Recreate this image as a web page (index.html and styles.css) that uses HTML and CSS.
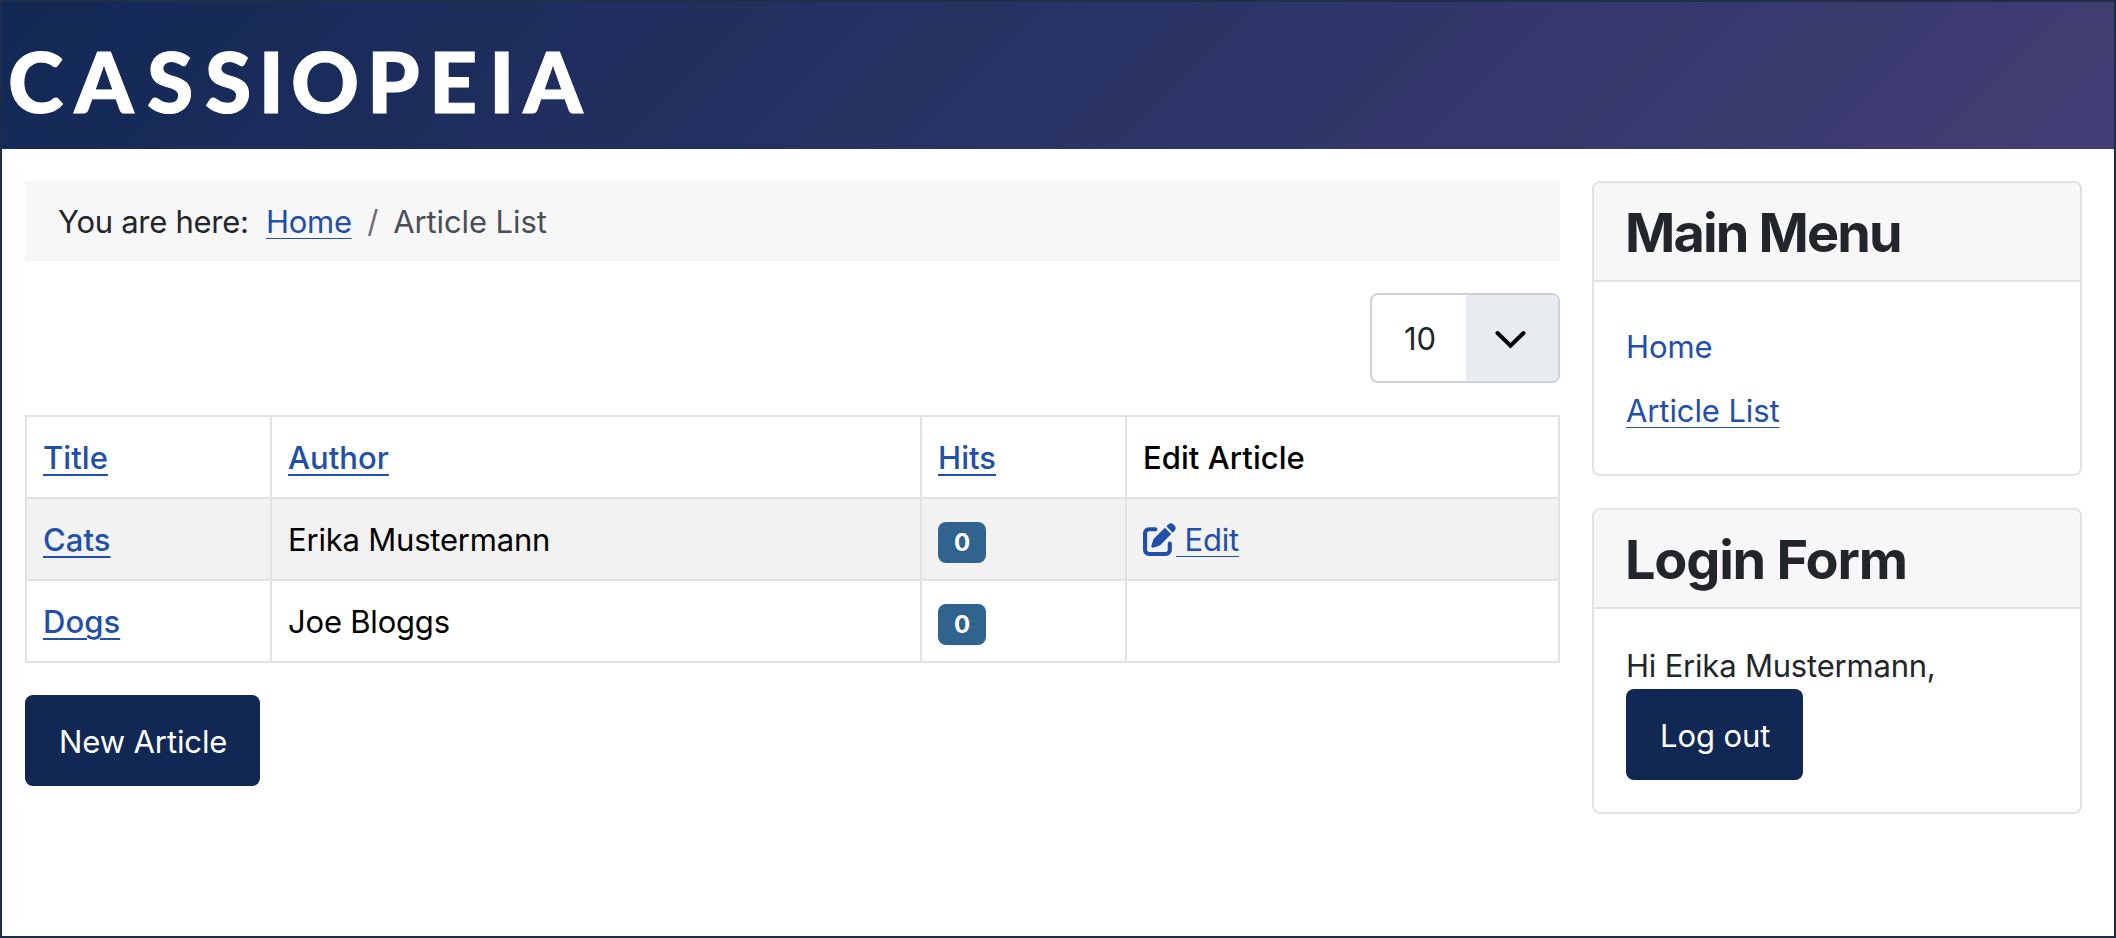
FILE: index.html
```html
<!DOCTYPE html>
<html lang="en">
<head>
<meta charset="utf-8">
<title>Article List</title>
<link rel="stylesheet" href="styles.css">
</head>
<body>
<div class="page">
  <header class="header">
    <svg class="brand" width="600" height="147" viewBox="2 2 600 147" role="img" aria-label="Cassiopeia">
      <text class="brand-text" y="113" x="8 74.5 147 205 258.5 291 367 429 489 523.5">CASSIOPEIA</text>
    </svg>
  </header>
  <div class="container">
    <main class="main">
      <nav class="breadcrumb">
        <span class="here">You are here:</span>
        <a class="link" href="#">Home</a>
        <span class="divider">/</span>
        <span class="current">Article List</span>
      </nav>
      <div class="limit">
        <div class="select">
          <span class="select-value">10</span>
          <span class="select-arrow">
            <svg width="32" height="20" viewBox="0 0 32 20"><path d="M3.5 3 L16.5 15.7 L29.5 3" fill="none" stroke="#000" stroke-width="4" stroke-linecap="round"/></svg>
          </span>
        </div>
      </div>
      <table class="articles">
        <colgroup><col class="c-title"><col class="c-author"><col class="c-hits"><col></colgroup>
        <thead>
          <tr>
            <th><a class="link strong" href="#">Title</a></th>
            <th><a class="link strong" href="#">Author</a></th>
            <th><a class="link strong" href="#">Hits</a></th>
            <th>Edit Article</th>
          </tr>
        </thead>
        <tbody>
          <tr class="striped">
            <th><a class="link strong" href="#">Cats</a></th>
            <td>Erika Mustermann</td>
            <td><div class="badge-box"><span class="badge">0</span></div></td>
            <td><a class="edit" href="#"><svg width="33" height="33" viewBox="0 0 512 512"><path fill="currentColor" d="M471.6 21.7c-21.9-21.9-57.3-21.9-79.2 0L362.3 51.7l97.9 97.9 30.1-30.1c21.9-21.9 21.9-57.3 0-79.2L471.6 21.7zm-299.2 220c-6.1 6.1-10.8 13.6-13.5 21.9l-29.6 88.8c-2.9 8.6-.6 18.1 5.8 24.6s15.9 8.7 24.6 5.8l88.8-29.6c8.2-2.7 15.7-7.4 21.9-13.5L437.7 172.3 339.7 74.3 172.4 241.7zM96 64C43 64 0 107 0 160V416c0 53 43 96 96 96H352c53 0 96-43 96-96V320c0-17.7-14.3-32-32-32s-32 14.3-32 32v96c0 17.7-14.3 32-32 32H96c-17.7 0-32-14.3-32-32V160c0-17.7 14.3-32 32-32h96c17.7 0 32-14.3 32-32s-14.3-32-32-32H96z"/></svg><span class="link edit-text">&nbsp;Edit</span></a></td>
          </tr>
          <tr>
            <th><a class="link strong" href="#">Dogs</a></th>
            <td>Joe Bloggs</td>
            <td><div class="badge-box"><span class="badge">0</span></div></td>
            <td></td>
          </tr>
        </tbody>
      </table>
      <a class="btn" href="#">New Article</a>
    </main>
    <aside class="sidebar">
      <section class="card">
        <h3 class="card-header menu-title">Main Menu</h3>
        <ul class="card-body menu">
          <li><a class="link plain" href="#">Home</a></li>
          <li><a class="link" href="#">Article List</a></li>
        </ul>
      </section>
      <section class="card">
        <h3 class="card-header login-title">Login Form</h3>
        <div class="card-body">
          <div class="greeting">Hi Erika Mustermann,</div>
          <button class="btn" type="button">Log out</button>
        </div>
      </section>
    </aside>
  </div>
</div>
</body>
</html>
```
FILE: styles.css
```css
* { box-sizing: border-box; }

body {
  margin: 0;
  font: 31px/48px Inter, "Liberation Sans", sans-serif;
  letter-spacing: -0.2px;
  color: #22262a;
  background: #fff;
}

.page {
  height: 938px;
  border: 2px solid #1b2d4b;
  border-top-color: #1e3048;
}

.header {
  height: 147px;
  background: linear-gradient(135deg, #112855 0%, #433e75 100%);
}

.brand { display: block; }
.brand-text {
  font-family: Lato, sans-serif;
  font-size: 84px;
  font-weight: 900;
  letter-spacing: 0;
  fill: #fff;
  stroke: #fff;
  stroke-width: 1px;
}

.container {
  display: grid;
  grid-template-columns: 1535px 490px;
  column-gap: 32px;
  padding: 32px 0 0 23px;
}

.main {
  display: flex;
  flex-direction: column;
  align-items: flex-start;
  gap: 32px;
}

.link {
  color: #224faa;
  text-decoration: underline 1px;
  text-underline-offset: 5px;
}
.link.strong { text-decoration-thickness: 2px; }
.link.plain { text-decoration: none; }

.breadcrumb {
  display: flex;
  width: 100%;
  height: 80px;
  padding: 17px 32px 15px 33px;
  background: #f7f7f7;
}
.here { width: 208px; letter-spacing: -0.27px; }
.breadcrumb .link { letter-spacing: -0.3px; }
.divider { margin: 0 15px 0 15.5px; color: #6b6f73; }
.current { color: #484f56; letter-spacing: -0.1px; }

.limit {
  display: flex;
  justify-content: flex-end;
  width: 100%;
}
.select {
  display: flex;
  width: 190px;
  height: 90px;
  border: 2px solid #cdd1d9;
  border-radius: 8px;
  overflow: hidden;
}
.select-value {
  width: 94px;
  padding: 20px 0 0 32px;
  letter-spacing: 0;
}
.select-arrow {
  flex: 1;
  padding: 35px 0 0 28px;
  line-height: 0;
  background: #e9ecef;
}

.articles {
  width: 1535px;
  height: 248px;
  table-layout: fixed;
  border-collapse: collapse;
  color: #000;
}
.c-title { width: 245px; }
.c-author { width: 650px; }
.c-hits { width: 205px; }
.articles th,
.articles td {
  height: 82px;
  padding: 17px 16px 15px;
  border: 2px solid #dfe3e7;
  font-weight: 400;
  text-align: left;
  vertical-align: top;
}
.articles th { font-weight: 500; letter-spacing: 0.05px; }
.striped { background: #f2f2f2; }

.badge-box {
  display: flex;
  align-items: center;
  height: 48px;
  padding-top: 5px;
}
.badge {
  width: 48px;
  height: 41px;
  border-radius: 8px;
  background: #30638d;
  color: #fff;
  font-size: 24px;
  font-weight: 700;
  line-height: 41px;
  text-align: center;
}

.edit {
  display: flex;
  color: #224faa;
  text-decoration: none;
}
.edit svg { margin-top: 7px; }

.btn {
  display: block;
  height: 91px;
  padding: 23px 33px 20px 34px;
  border: 0;
  border-radius: 8px;
  background: #112855;
  color: #fff;
  font: inherit;
  letter-spacing: -0.1px;
  text-decoration: none;
}

.sidebar {
  display: flex;
  flex-direction: column;
  gap: 32px;
}
.card {
  border: 2px solid #dfe3e7;
  border-radius: 8px;
  overflow: hidden;
}
.card-header {
  height: 99px;
  margin: 0;
  padding: 17px 32px 0 31px;
  border-bottom: 2px solid #dfe3e7;
  background: #f7f7f7;
  font-size: 54px;
  font-weight: 700;
  line-height: 65px;
}
.menu-title { letter-spacing: -1.85px; }
.login-title { letter-spacing: -1.2px; }
.card-body {
  margin: 0;
  padding: 33px 32px 32px;
}
.card-body .btn { margin-top: -1px; }
.menu {
  height: 192px;
  list-style: none;
  letter-spacing: -0.1px;
}
.menu li { padding: 8px 0; }
```
